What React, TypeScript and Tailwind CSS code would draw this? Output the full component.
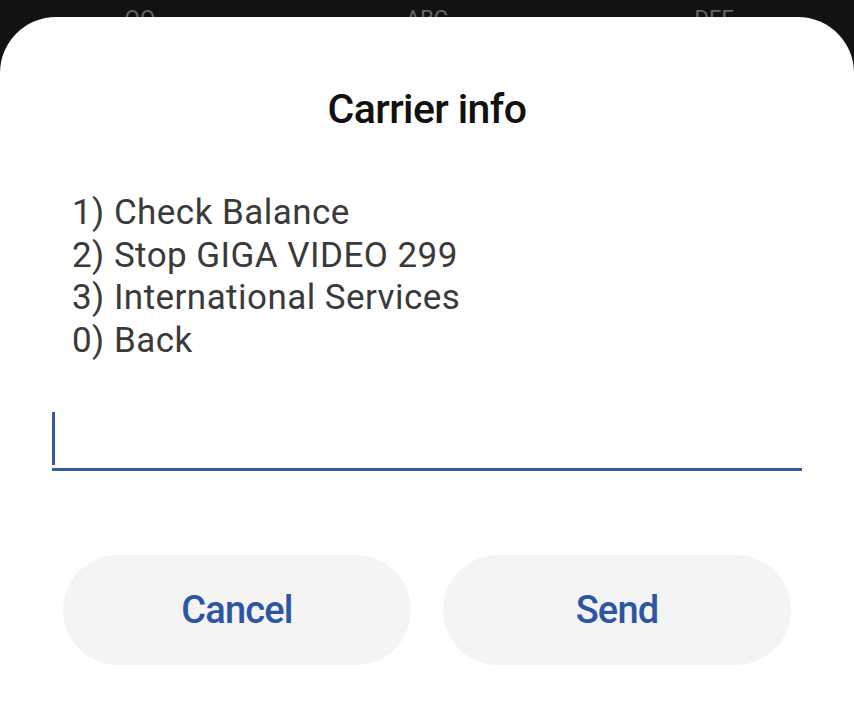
export default function App() {
  const items = [
    "1) Check Balance",
    "2) Stop GIGA VIDEO 299",
    "3) International Services",
    "0) Back",
  ];

  return (
    <div
      className="relative w-[854px] h-[720px] bg-[#121212] overflow-hidden"
      style={{ fontFamily: "Roboto, 'Noto Sans', sans-serif" }}
    >
      {/* keypad letters peeking above the dialog */}
      <div className="absolute top-[8px] left-0 w-full flex text-[22px] text-[#666] leading-none">
        <div className="w-[280px] text-center">QO</div>
        <div className="w-[294px] text-center">ABC</div>
        <div className="w-[280px] text-center">DEF</div>
      </div>

      <div className="absolute top-[17px] left-0 w-full h-[720px] bg-white rounded-t-[56px] flex flex-col">
        <h1 className="mt-[72px] text-center text-[41px] font-medium text-[#111] leading-none tracking-[-0.6px]">
          Carrier info
        </h1>

        <div className="mt-[62px] pl-[72px] text-[35px] text-[#3a3a3a] leading-[42.5px] tracking-[0.45px]">
          {items.map((t) => (
            <div key={t}>{t}</div>
          ))}
        </div>

        <div className="mx-[52px] mt-[50px] h-[59px] border-b-[3px] border-[#3557a6] flex items-start">
          <div className="w-[3px] h-[53px] bg-[#3557a6]" />
        </div>

        <div className="mt-[84px] px-[63px] flex gap-[32px]">
          <button className="w-[348px] h-[110px] rounded-full bg-[#f4f4f4] text-[#2d55a3] text-[38px] font-medium tracking-[-0.8px]">
            Cancel
          </button>
          <button className="w-[348px] h-[110px] rounded-full bg-[#f4f4f4] text-[#2d55a3] text-[38px] font-medium tracking-[-0.8px]">
            Send
          </button>
        </div>
      </div>
    </div>
  );
}
